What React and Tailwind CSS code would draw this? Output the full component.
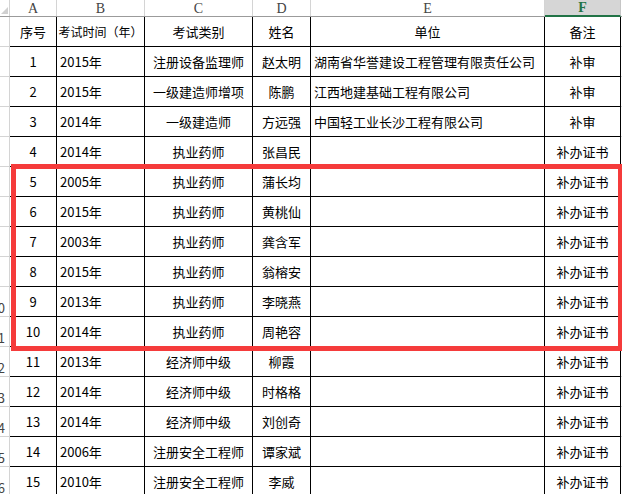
import React from "react";

const rows = [
  ["1", "2015年", "注册设备监理师", "赵太明", "湖南省华誉建设工程管理有限责任公司", "补审"],
  ["2", "2015年", "一级建造师增项", "陈鹏", "江西地建基础工程有限公司", "补审"],
  ["3", "2014年", "一级建造师", "方远强", "中国轻工业长沙工程有限公司", "补审"],
  ["4", "2014年", "执业药师", "张昌民", "", "补办证书"],
  ["5", "2005年", "执业药师", "蒲长均", "", "补办证书"],
  ["6", "2015年", "执业药师", "黄桃仙", "", "补办证书"],
  ["7", "2003年", "执业药师", "龚含军", "", "补办证书"],
  ["8", "2015年", "执业药师", "翁榕安", "", "补办证书"],
  ["9", "2013年", "执业药师", "李晓燕", "", "补办证书"],
  ["10", "2014年", "执业药师", "周艳容", "", "补办证书"],
  ["11", "2013年", "经济师中级", "柳霞", "", "补办证书"],
  ["12", "2014年", "经济师中级", "时格格", "", "补办证书"],
  ["13", "2014年", "经济师中级", "刘创奇", "", "补办证书"],
  ["14", "2006年", "注册安全工程师", "谭家斌", "", "补办证书"],
  ["15", "2010年", "注册安全工程师", "李威", "", "补办证书"],
];

const widths = ["w-[47px]", "w-[88px]", "w-[108px]", "w-[58px]", "w-[234px]", "w-[76px]"];
const aligns = ["justify-center", "justify-start pl-[3px]", "justify-center", "justify-center", "justify-start pl-[3px]", "justify-center"];

function Row({ cells, gutter, header }) {
  return (
    <div className="flex h-[30px]">
      <div className="w-[10px] shrink-0 border-r border-b border-[#d4d4d4] overflow-hidden relative">
        {gutter && (
          <span className="absolute right-[4px] bottom-[2px] text-[13px] text-[#444] leading-none">{gutter}</span>
        )}
      </div>
      {cells.map((c, i) => (
        <div
          key={i}
          className={`${widths[i]} shrink-0 flex items-center border-r border-b border-black whitespace-nowrap overflow-hidden ${
            header ? (i === 1 ? "justify-center text-[12px]" : "justify-center") : aligns[i]
          }`}
        >
          {c}
        </div>
      ))}
      <div className="flex-1 border-b border-[#d4d4d4]" />
    </div>
  );
}

export default function App() {
  const letters = ["A", "B", "C", "D", "E", "F"];
  return (
    <div
      className="relative w-[622px] h-[494px] overflow-hidden bg-white text-[13px] text-black"
      style={{ fontFamily: '"Noto Sans CJK SC", "Noto Sans", sans-serif' }}
    >
      {/* column letters */}
      <div className="flex h-[17px] border-b border-[#9b9b9b] bg-white" style={{ fontFamily: '"Liberation Serif", serif' }}>
        <div className="w-[10px] shrink-0 border-r border-[#d4d4d4] relative overflow-hidden">
          <div className="absolute right-[1px] bottom-[2px] w-0 h-0 border-l-[7px] border-l-transparent border-b-[7px] border-b-[#d0d0d0]" />
        </div>
        {letters.map((l, i) =>
          l === "F" ? (
            <div
              key={l}
              className={`${widths[i]} shrink-0 flex items-center justify-center bg-[#d6d6d6] border-r border-[#c6c6c6] border-b-2 border-b-[#217346] text-[#217346] font-bold text-[14px] -mb-[1px]`}
            >
              {l}
            </div>
          ) : (
            <div
              key={l}
              className={`${widths[i]} shrink-0 flex items-center justify-center border-r border-[#d4d4d4] text-[#444] text-[14px]`}
            >
              {l}
            </div>
          )
        )}
        <div className="flex-1" />
      </div>

      <Row header cells={["序号", "考试时间（年）", "考试类别", "姓名", "单位", "备注"]} />
      {rows.map((r, idx) => (
        <Row key={idx} cells={r} gutter={idx >= 8 ? String(idx + 2) : null} />
      ))}

      {/* red highlight box */}
      <div className="absolute left-[11px] top-[164px] w-[612px] h-[187px] border-[5px] border-[#f53b3b]" />
    </div>
  );
}
